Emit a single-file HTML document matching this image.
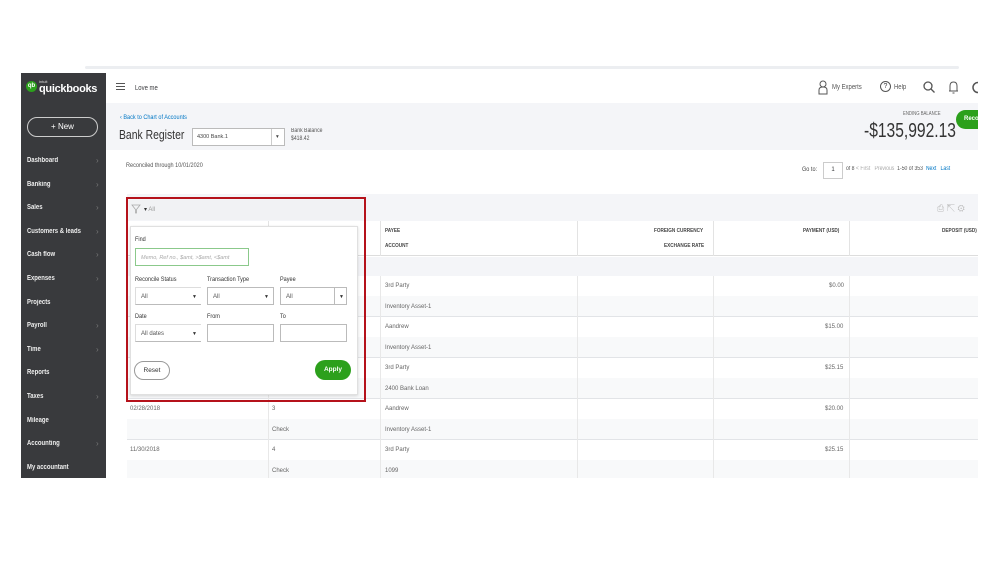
<!DOCTYPE html>
<html><head><meta charset="utf-8"><style>
*{box-sizing:border-box;margin:0;padding:0}
body{width:999px;height:562px;background:#fff;position:relative;overflow:hidden;font-family:"Liberation Sans",sans-serif;font-size:7px;color:#393a3d}
.a{position:absolute}
.c{transform:scaleX(0.85);transform-origin:left top;white-space:nowrap}
.topline{left:85px;top:66px;width:874px;height:3px;background:#eceef1;border-radius:2px}
.side{left:21px;top:73px;width:85px;height:405px;background:#393a3d;color:#fff}
.side .it{position:absolute;left:6px;font-size:7px;font-weight:bold;color:#eee;transform:scaleX(0.85);transform-origin:left top;white-space:nowrap}
.side .ch{position:absolute;left:75px;color:#777;font-size:8px}
.gray{background:#f4f5f8}
.hd{font-size:5.5px;font-weight:bold;color:#444}
.cell{position:absolute;font-size:6px;color:#666}
.inp{position:absolute;border:1px solid #bbb;background:#fff;height:18px;font-size:6px;color:#555;padding:6px 0 0 5px}
.lbl{position:absolute;font-size:6.5px;color:#333}
.ar{position:absolute;font-size:5px;color:#333}
</style></head><body>
<div class="a topline"></div>
<div class="a side">
 <div class="a" style="left:5px;top:8px;width:11px;height:11px;border-radius:50%;background:#2ca01c;color:#fff;font-size:6px;text-align:center;line-height:11px;font-weight:bold">qb</div>
 <div class="a" style="left:18px;top:6px;font-size:4px;color:#ddd">intuit</div>
 <div class="a" style="left:18px;top:10px;font-size:11px;font-weight:bold;color:#fff;letter-spacing:-0.3px">quickbooks</div>
 <div class="a" style="left:6px;top:44px;width:71px;height:20px;border:1px solid #ccc;border-radius:10px;text-align:center;line-height:18px;font-size:8px;color:#fff">+ New</div>
 <div class="it" style="top:84px">Dashboard</div><div class="ch" style="top:83px">›</div>
 <div class="it" style="top:108px">Banking</div><div class="ch" style="top:107px">›</div>
 <div class="it" style="top:131px">Sales</div><div class="ch" style="top:130px">›</div>
 <div class="it" style="top:155px">Customers &amp; leads</div><div class="ch" style="top:154px">›</div>
 <div class="it" style="top:178px">Cash flow</div><div class="ch" style="top:177px">›</div>
 <div class="it" style="top:202px">Expenses</div><div class="ch" style="top:201px">›</div>
 <div class="it" style="top:226px">Projects</div>
 <div class="it" style="top:249px">Payroll</div><div class="ch" style="top:248px">›</div>
 <div class="it" style="top:273px">Time</div><div class="ch" style="top:272px">›</div>
 <div class="it" style="top:296px">Reports</div>
 <div class="it" style="top:320px">Taxes</div><div class="ch" style="top:319px">›</div>
 <div class="it" style="top:344px">Mileage</div>
 <div class="it" style="top:367px">Accounting</div><div class="ch" style="top:366px">›</div>
 <div class="it" style="top:391px">My accountant</div>
</div>
<div class="a" style="left:116px;top:83px;width:9px;height:7px;border-top:1.3px solid #555;border-bottom:1.3px solid #555"><div style="margin-top:1.6px;height:1.3px;background:#555"></div></div>
<div class="a c" style="left:135px;top:85px;font-size:7px">Love me</div>
<svg class="a" style="left:818px;top:80px" width="10" height="15" viewBox="0 0 10 15"><circle cx="5" cy="4" r="3" fill="none" stroke="#555"/><path d="M1 14V10q0-3 4-3t4 3v4z" fill="none" stroke="#555"/></svg>
<div class="a c" style="left:832px;top:84px;font-size:7px;color:#555">My Experts</div>
<div class="a" style="left:880px;top:81px;width:11px;height:11px;border:1px solid #555;border-radius:50%;font-size:7px;text-align:center;line-height:10px">?</div>
<div class="a c" style="left:894px;top:84px;font-size:7px;color:#555">Help</div>
<svg class="a" style="left:923px;top:81px" width="12" height="12"><circle cx="5" cy="5" r="4" fill="none" stroke="#555" stroke-width="1.3"/><path d="M8 8l3.5 3.5" stroke="#555" stroke-width="1.3"/></svg>
<svg class="a" style="left:948px;top:80px" width="11" height="14"><path d="M2 11V6q0-4 3.5-4T9 6v5zM1 11h9M4.5 13h2" fill="none" stroke="#555"/></svg>
<svg class="a" style="left:971px;top:81px" width="8" height="13"><circle cx="7" cy="6.5" r="5" fill="none" stroke="#555" stroke-width="1.5"/></svg>
<div class="a gray" style="left:106px;top:103px;width:872px;height:47px"></div>
<div class="a c" style="left:120px;top:114px;font-size:6.5px;color:#0077c5">‹ Back to Chart of Accounts</div>
<div class="a c" style="left:119px;top:127px;font-size:13px;color:#333;transform:scaleX(0.8)">Bank Register</div>
<div class="a" style="left:192px;top:128px;width:93px;height:18px;border:1px solid #bbb;background:#fff;font-size:5.5px;padding:5px 4px;color:#444">4300 Bank.1<span style="position:absolute;left:78px;top:0;height:16px;border-left:1px solid #ccc;padding:5px 4px">▾</span></div>
<div class="a c" style="left:291px;top:127px;font-size:6px;color:#555;line-height:8px">Bank Balance<br>$418.42</div>
<div class="a c" style="left:903px;top:111px;font-size:5px;color:#666">ENDING BALANCE</div>
<div class="a c" style="left:864px;top:120px;font-size:20px;color:#333;transform:scaleX(0.78)">-$135,992.13</div>
<div class="a" style="left:956px;top:110px;width:30px;height:19px;background:#2ca01c;border-radius:10px 0 0 10px;color:#fff;font-size:6px;font-weight:bold;padding:6px 8px">Reco</div>
<div class="a" style="left:978px;top:60px;width:21px;height:440px;background:#fff"></div>
<div class="a c" style="left:126px;top:162px;font-size:6.5px;color:#555">Reconciled through 10/01/2020</div>
<div class="a c" style="left:802px;top:166px;font-size:6.5px;color:#444">Go to:</div>
<div class="a" style="left:823px;top:162px;width:20px;height:17px;border:1px solid #ccc;font-size:6px;text-align:center;line-height:15px">1</div>
<div class="a c" style="left:846px;top:166px;font-size:6px;color:#555">of 8 <span style="color:#aaa">&lt; First &nbsp; Previous</span> &nbsp;1-50 of 353 &nbsp;<span style="color:#0077c5">Next &nbsp; Last</span></div>
<div class="a gray" style="left:127px;top:194px;width:851px;height:27px"></div>
<div class="a" style="left:937px;top:203px;font-size:9px;color:#bbb">⎙ ⇱ ⚙</div>
<div class="a" style="left:127px;top:221px;width:851px;height:35px;border-bottom:1px solid #ddd"></div>
<div class="a" style="left:268px;top:221px;width:1px;height:35px;background:#e3e3e3"></div>
<div class="a" style="left:380px;top:221px;width:1px;height:35px;background:#e3e3e3"></div>
<div class="a" style="left:577px;top:221px;width:1px;height:35px;background:#e3e3e3"></div>
<div class="a" style="left:713px;top:221px;width:1px;height:35px;background:#e3e3e3"></div>
<div class="a" style="left:849px;top:221px;width:1px;height:35px;background:#e3e3e3"></div>
<div class="a hd c" style="left:385px;top:228px">PAYEE</div>
<div class="a hd c" style="left:385px;top:243px">ACCOUNT</div>
<div class="a hd c" style="left:654px;top:228px">FOREIGN CURRENCY</div>
<div class="a hd c" style="left:664px;top:243px">EXCHANGE RATE</div>
<div class="a hd c" style="left:803px;top:228px">PAYMENT (USD)</div>
<div class="a hd c" style="left:942px;top:228px">DEPOSIT (USD)</div>
<div class="a gray" style="left:127px;top:257px;width:851px;height:19px"></div>
<div class="a" style="left:127px;top:276px;width:851px;height:202px;background:
repeating-linear-gradient(to bottom,#fff 0,#fff 20px,#f8f9fa 20px,#f8f9fa 40px,#e2e4e7 40px,#e2e4e7 41px)"></div>
<div class="a" style="left:268px;top:276px;width:1px;height:202px;background:#e8e8e8"></div>
<div class="a" style="left:380px;top:276px;width:1px;height:202px;background:#e8e8e8"></div>
<div class="a" style="left:577px;top:276px;width:1px;height:202px;background:#e8e8e8"></div>
<div class="a" style="left:713px;top:276px;width:1px;height:202px;background:#e8e8e8"></div>
<div class="a" style="left:849px;top:276px;width:1px;height:202px;background:#e8e8e8"></div>
<div class="cell" style="left:385px;top:283px">3rd Party</div><div class="cell" style="left:385px;top:304px">Inventory Asset-1</div><div class="cell" style="left:829px;top:283px">$0.00</div>
<div class="cell" style="left:385px;top:324px">Aandrew</div><div class="cell" style="left:385px;top:345px">Inventory Asset-1</div><div class="cell" style="left:825px;top:324px">$15.00</div>
<div class="cell" style="left:385px;top:365px">3rd Party</div><div class="cell" style="left:385px;top:386px">2400 Bank Loan</div><div class="cell" style="left:825px;top:365px">$25.15</div>
<div class="cell" style="left:130px;top:406px">02/28/2018</div><div class="cell" style="left:272px;top:406px">3</div><div class="cell" style="left:272px;top:427px">Check</div><div class="cell" style="left:385px;top:406px">Aandrew</div><div class="cell" style="left:385px;top:427px">Inventory Asset-1</div><div class="cell" style="left:825px;top:406px">$20.00</div>
<div class="cell" style="left:130px;top:447px">11/30/2018</div><div class="cell" style="left:272px;top:447px">4</div><div class="cell" style="left:272px;top:468px">Check</div><div class="cell" style="left:385px;top:447px">3rd Party</div><div class="cell" style="left:385px;top:468px">1099</div><div class="cell" style="left:825px;top:447px">$25.15</div>
<div class="a" style="left:126px;top:197px;width:240px;height:205px;border:2.5px solid #b5121b"></div>
<div class="a" style="left:129px;top:200px;width:234px;height:20px;background:#f1f2f4"></div>
<svg class="a" style="left:131px;top:204px" width="10" height="10"><path d="M1 1h8L5.5 5.5V9L4.5 9V5.5z" fill="none" stroke="#aaa" stroke-width="0.8"/></svg>
<div class="a" style="left:144px;top:206px;font-size:6px;color:#999"><span style="color:#333">▾</span> All</div>
<div class="a" style="left:130px;top:226px;width:228px;height:169px;background:#fff;border:1px solid #e0e0e0;box-shadow:0 1px 3px rgba(0,0,0,.15)"></div>
<div class="lbl c" style="left:135px;top:236px">Find</div>
<div class="inp" style="left:135px;top:248px;width:114px;border-color:#8bc98b;font-style:italic;color:#aaa;font-size:5.5px">Memo, Ref no., $amt, &gt;$amt, &lt;$amt</div>
<div class="lbl c" style="left:135px;top:276px">Reconcile Status</div>
<div class="lbl c" style="left:207px;top:276px">Transaction Type</div>
<div class="lbl c" style="left:280px;top:276px">Payee</div>
<div class="inp" style="left:135px;top:287px;width:66px;border-top-color:#ddd;border-right:none;border-left-color:#ddd">All<span class="ar" style="left:56px;top:6px">▼</span></div>
<div class="inp" style="left:207px;top:287px;width:67px">All<span class="ar" style="left:56px;top:6px">▼</span></div>
<div class="inp" style="left:280px;top:287px;width:67px">All<span style="position:absolute;left:53px;top:0;height:16px;border-left:1px solid #bbb"></span><span class="ar" style="left:58px;top:6px">▼</span></div>
<div class="lbl c" style="left:135px;top:313px">Date</div>
<div class="lbl c" style="left:207px;top:313px">From</div>
<div class="lbl c" style="left:280px;top:313px">To</div>
<div class="inp" style="left:135px;top:324px;width:66px;border-top-color:#ddd;border-right:none;border-left-color:#ddd">All dates<span class="ar" style="left:56px;top:6px">▼</span></div>
<div class="inp" style="left:207px;top:324px;width:67px"></div>
<div class="inp" style="left:280px;top:324px;width:67px"></div>
<div class="a" style="left:134px;top:361px;width:36px;height:19px;border:1px solid #999;border-radius:10px;font-size:6.5px;text-align:center;line-height:17px;color:#333">Reset</div>
<div class="a" style="left:315px;top:360px;width:36px;height:20px;background:#2ca01c;border-radius:10px;font-size:6.5px;font-weight:bold;text-align:center;line-height:20px;color:#fff">Apply</div>
</body></html>
